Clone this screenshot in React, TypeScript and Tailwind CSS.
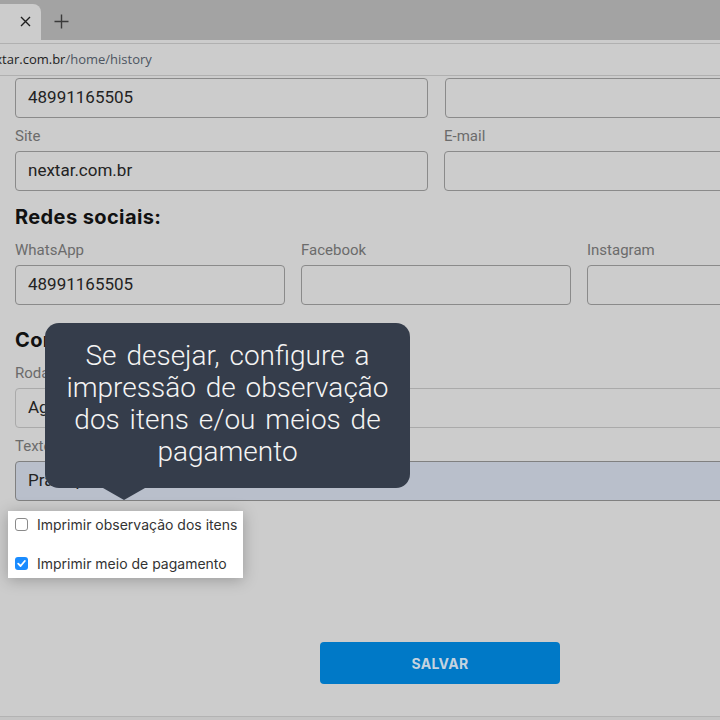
import React from "react";

const font = { fontFamily: "Roboto, 'Noto Sans', sans-serif" };

function Field({ label, value, w, bg = "bg-[#cccccc]", border = "border-[#8a8a8a]" }: { label?: string; value?: string; w: string; bg?: string; border?: string }) {
  return (
    <div className={`flex flex-col ${w} shrink-0`}>
      {label !== undefined && (
        <div className="h-[20px] leading-[20px] text-[15px] text-[#6b6b6b] mb-[5px]">{label}</div>
      )}
      <div className={`h-[40px] rounded-[4px] border ${border} ${bg} flex items-center px-[12px] text-[17px] text-[#232323] whitespace-nowrap overflow-hidden`}>
        {value}
      </div>
    </div>
  );
}

export default function App() {
  return (
    <div className="w-[720px] h-[720px] overflow-hidden bg-[#cccccc] relative" style={font}>
      {/* tab strip */}
      <div className="h-[40px] bg-[#a3a3a3] flex items-end">
        <div className="w-[41px] h-[36px] bg-[#cccccc] rounded-tr-[8px] flex items-center justify-end pr-[10px] pb-[2px]">
          <svg width="11" height="11" viewBox="0 0 11 11"><path d="M1 1L10 10M10 1L1 10" stroke="#1f1f1f" strokeWidth="1.4" /></svg>
        </div>
        <div className="w-[40px] h-[36px] flex items-center justify-center pb-[2px]">
          <svg width="15" height="15" viewBox="0 0 15 15"><path d="M7.5 0.5V14.5M0.5 7.5H14.5" stroke="#3a3a3a" strokeWidth="1.4" /></svg>
        </div>
      </div>
      <div className="h-[4px] bg-[#cccccc] border-b border-[#b0b0b0]"></div>
      {/* address bar */}
      <div className="h-[32px] border-b border-[#b0b0b0] flex items-center overflow-hidden">
        <div className="ml-[-20px] text-[13px] whitespace-nowrap" style={{ fontFamily: "'Open Sans', 'Noto Sans', sans-serif" }}>
          <span className="text-[#1e1e1e]">nextar.com.br</span>
          <span className="text-[#4d5561]">/home/history</span>
        </div>
      </div>

      {/* page */}
      <div className="pl-[15px] pt-[2px] flex flex-col">
        <div className="flex gap-[17px]">
          <Field w="w-[413px]" value="48991165505" />
          <Field w="w-[413px]" />
        </div>
        <div className="flex gap-[16px] mt-[8px]">
          <Field w="w-[413px]" label="Site" value="nextar.com.br" />
          <Field w="w-[413px]" label="E-mail" />
        </div>
        <div className="mt-[12px] h-[28px] leading-[28px] text-[20px] font-bold tracking-[0.4px] text-[#111]" style={{ fontFamily: "Inter, sans-serif" }}>
          Redes sociais:
        </div>
        <div className="flex gap-[16px] mt-[9px]">
          <Field w="w-[270px]" label="WhatsApp" value="48991165505" />
          <Field w="w-[270px]" label="Facebook" />
          <Field w="w-[270px]" label="Instagram" />
        </div>
        <div className="mt-[21px] h-[28px] leading-[28px] text-[20px] font-bold tracking-[0.4px] text-[#111]" style={{ fontFamily: "Inter, sans-serif" }}>
          Configurações de impressão:
        </div>
        <div className="mt-[9px]">
          <Field w="w-[900px]" label="Rodapé" value="Agradecemos a preferência" border="border-[#aaaaaa]" />
        </div>
        <div className="mt-[8px]">
          <Field w="w-[900px]" label="Texto" value="Prazo para troca" bg="bg-[#b9bfcb]" border="border-[#808080]" />
        </div>

        {/* highlighted checkbox area */}
        <div className="ml-[-7px] mt-[10px] w-[235px] h-[67px] bg-white shadow-[0_2px_14px_rgba(0,0,0,0.25)] flex flex-col px-[7px] pt-[3px] gap-[19px] text-[14px] text-[#333] whitespace-nowrap" style={{ fontFamily: "Inter, sans-serif" }}>
          <label className="flex items-center gap-[9px] h-[20px]">
            <span className="w-[13px] h-[13px] rounded-[3px] border border-[#8a8a8a] bg-white shrink-0"></span>
            <span>Imprimir observação dos itens</span>
          </label>
          <label className="flex items-center gap-[9px] h-[20px]">
            <span className="w-[13px] h-[13px] rounded-[3px] bg-[#1a8cff] shrink-0 flex items-center justify-center">
              <svg width="9" height="9" viewBox="0 0 9 9"><path d="M1.2 4.6L3.6 7L7.8 2" stroke="white" strokeWidth="1.8" fill="none" strokeLinecap="round" strokeLinejoin="round" /></svg>
            </span>
            <span>Imprimir meio de pagamento</span>
          </label>
        </div>

        <div className="mt-[64px] ml-[305px] w-[240px] h-[42px] rounded-[4px] bg-[#0079c7] flex items-center justify-center text-[14px] font-bold text-[#c5d3df] tracking-[0.3px]" style={{ fontFamily: "Inter, sans-serif" }}>
          SALVAR
        </div>
      </div>

      <div className="absolute left-0 right-0 top-[716px] h-[4px] bg-[#c4c4c4] border-t border-[#b3b3b3]"></div>

      {/* tooltip */}
      <div className="absolute left-[45px] top-[323px] w-[365px] h-[165px] rounded-[14px] bg-[#353d4b] pt-[17px] text-center text-[28px] leading-[32px] text-[#f4f4f4] font-light [word-spacing:3px]" style={{ fontFamily: "Roboto, sans-serif" }}>
        Se desejar, configure a<br />impressão de observação<br />dos itens e/ou meios de<br />pagamento
        <div className="absolute left-[58px] top-full w-0 h-0 border-l-[21px] border-r-[21px] border-t-[12px] border-l-transparent border-r-transparent border-t-[#353d4b]"></div>
      </div>
    </div>
  );
}
